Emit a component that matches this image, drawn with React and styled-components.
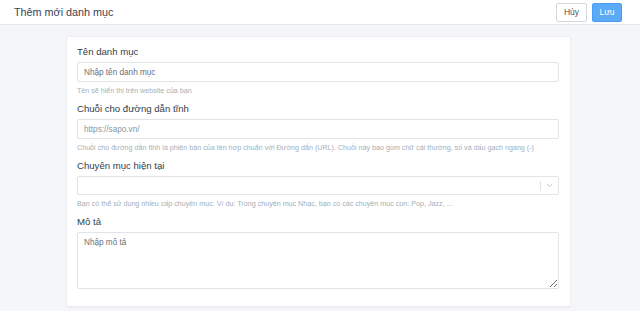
import React from "react";
import styled, { createGlobalStyle } from "styled-components";

const GlobalStyle = createGlobalStyle`
  html, body {
    margin: 0;
    padding: 0;
    background: #f4f6f8;
    font-family: "Liberation Sans", Arial, sans-serif;
  }
  * {
    box-sizing: border-box;
  }
`;

const Page = styled.div`
  width: 640px;
  height: 311px;
  overflow: hidden;
  background: #f4f6f8;
`;

const Header = styled.header`
  height: 25px;
  display: flex;
  align-items: center;
  justify-content: space-between;
  padding: 0 18px 0 14px;
  background: #ffffff;
  border-bottom: 1px solid #e6e8eb;
`;

const Title = styled.h1`
  margin: 0;
  font-size: 10.8px;
  font-weight: 400;
  color: #3a4450;
`;

const Actions = styled.div`
  display: flex;
  gap: 5px;
`;

const Button = styled.button`
  height: 19px;
  width: ${(p) => (p.$primary ? "30px" : "31px")};
  padding: 0;
  font-family: inherit;
  font-size: 8.5px;
  border-radius: 2px;
  border: 1px solid ${(p) => (p.$primary ? "#4a9ff5" : "#d3d8de")};
  background: ${(p) => (p.$primary ? "#5aaaf7" : "#ffffff")};
  color: ${(p) => (p.$primary ? "#ffffff" : "#4b5560")};
`;

const Content = styled.main`
  padding: 11px 0 0 66px;
`;

const Card = styled.section`
  width: 505px;
  background: #ffffff;
  border: 1px solid #eceef1;
  border-radius: 3px;
  box-shadow: 0 1px 1px rgba(0, 0, 0, 0.04);
  padding: 9px 10px 17px 10px;
`;

const Field = styled.div`
  display: flex;
  flex-direction: column;
  & + & {
    margin-top: 6px;
  }
`;

const Label = styled.label`
  font-size: 9.6px;
  line-height: 12px;
  color: #333d47;
  margin-bottom: 4px;
`;

const inputBase = `
  width: 482px;
  border: 1px solid #e1e5ea;
  border-radius: 2px;
  background: #ffffff;
  font-family: "Liberation Sans", Arial, sans-serif;
  font-size: 8.2px;
  color: #2c3640;
  padding: 0 6px;
  outline: none;
  &::placeholder {
    color: #66717c;
  }
`;

const Input = styled.input`
  ${inputBase}
  height: 20px;
  &::placeholder {
    color: ${(p) => (p.$muted ? "#8995a3" : "#66717c")};
  }
`;

const TextArea = styled.textarea`
  ${inputBase}
  height: 57px;
  padding: 5px 6px;
  resize: vertical;
`;

const Select = styled.div`
  width: 482px;
  height: 19px;
  border: 1px solid #e1e5ea;
  border-radius: 2px;
  display: flex;
  align-items: center;
  justify-content: flex-end;
`;

const Divider = styled.span`
  width: 1px;
  height: 10px;
  background: #dfe3e8;
`;

const Chevron = styled.span`
  display: flex;
  align-items: center;
  justify-content: center;
  width: 17px;
  color: #b5bcc4;
`;

const Help = styled.p`
  margin: 3px 0 0;
  font-size: 7.15px;
  line-height: 12px;
  color: #a5afb9;
  white-space: nowrap;
`;

export default function App() {
  return (
    <Page>
      <GlobalStyle />
      <Header>
        <Title>Thêm mới danh mục</Title>
        <Actions>
          <Button>Hủy</Button>
          <Button $primary>Lưu</Button>
        </Actions>
      </Header>
      <Content>
        <Card>
          <Field>
            <Label>Tên danh mục</Label>
            <Input placeholder="Nhập tên danh mục" />
            <Help>Tên sẽ hiển thị trên website của bạn</Help>
          </Field>
          <Field>
            <Label>Chuỗi cho đường dẫn tĩnh</Label>
            <Input $muted placeholder="https://sapo.vn/" />
            <Help>
              Chuỗi cho đường dẫn tĩnh là phiên bản của tên hợp chuẩn với Đường dẫn (URL). Chuỗi này bao gồm chữ cái thường, số và dấu gạch ngang (-)
            </Help>
          </Field>
          <Field>
            <Label>Chuyên mục hiện tại</Label>
            <Select>
              <Divider />
              <Chevron>
                <svg width="7" height="5" viewBox="0 0 7 5" fill="none">
                  <path d="M0.8 1 L3.5 3.6 L6.2 1" stroke="currentColor" strokeWidth="0.9" />
                </svg>
              </Chevron>
            </Select>
            <Help>
              Bạn có thể sử dụng nhiều cấp chuyên mục. Ví dụ: Trong chuyên mục Nhạc, bạn có các chuyên mục con: Pop, Jazz, ...
            </Help>
          </Field>
          <Field>
            <Label>Mô tả</Label>
            <TextArea placeholder="Nhập mô tả" />
          </Field>
        </Card>
      </Content>
    </Page>
  );
}
